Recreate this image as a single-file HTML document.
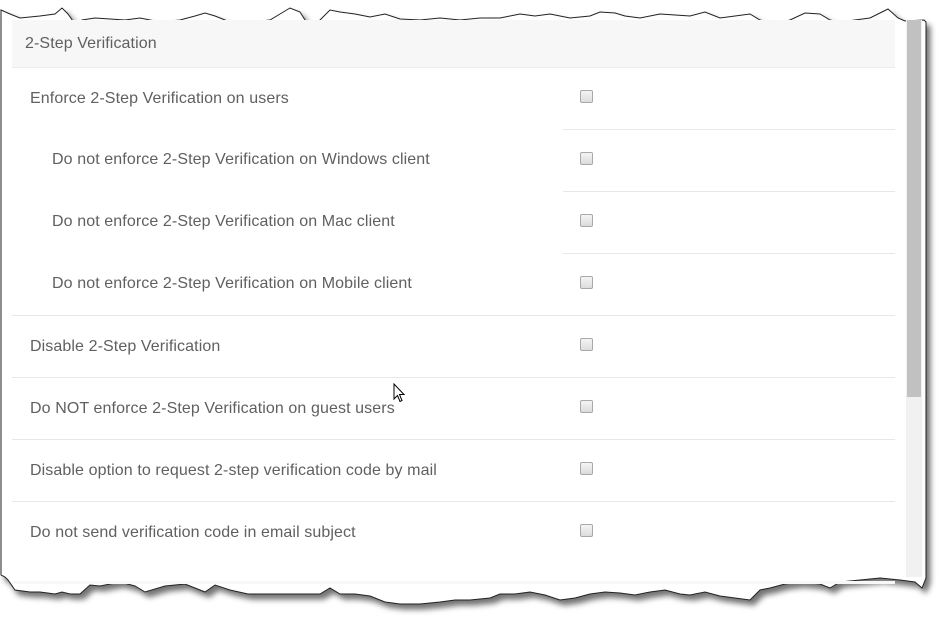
<!DOCTYPE html>
<html><head><meta charset="utf-8"><style>
body{margin:0;width:942px;height:630px;background:#fff;position:relative;overflow:hidden;font-family:"Liberation Sans",sans-serif;}
.t{position:absolute;font-size:16px;letter-spacing:0.1px;color:#606060;white-space:nowrap;line-height:18px}
.cb{position:absolute;left:580px;width:11px;height:11px;border:1px solid #a9a9a9;border-radius:2px;background:linear-gradient(#f4f4f4,#dcdcdc)}
.ln{position:absolute;height:1px;background:#e8e8e8;right:47px}
</style></head><body>
<svg width="942" height="630" style="position:absolute;left:0;top:0">
<defs><filter id="s" x="-5%" y="-5%" width="110%" height="115%"><feDropShadow dx="4" dy="5" stdDeviation="3" flood-color="#000" flood-opacity="0.55"/></filter></defs>
<path filter="url(#s)" fill="#fff" stroke="#222" stroke-width="1" d="M1,10 L10,14 L20,18 L40,16 L55,14 L62,8 L68,14 L75,24 L82,20 L95,18 L110,19 L125,20 L140,18 L160,22 L180,20 L195,16 L205,13 L215,16 L230,22 L250,22 L270,20 L280,14 L290,8 L300,12 L310,28 L318,22 L330,10 L340,12 L355,14 L370,17 L385,14 L400,19 L420,20 L440,18 L460,20 L480,18 L500,18 L520,14 L535,16 L550,14 L570,18 L590,16 L600,12 L615,13 L625,16 L640,18 L660,14 L675,15 L690,16 L705,12 L720,18 L735,16 L750,14 L760,20 L775,24 L790,20 L805,13 L820,14 L830,20 L840,22 L855,20 L870,18 L880,13 L888,9 L898,18 L905,21 L924,20 L926,22 L926,578 L922,588 L915,582 L900,580 L880,578 L860,580 L840,582 L830,588 L820,584 L800,582 L785,584 L770,588 L760,590 L750,600 L735,598 L720,596 L705,592 L690,595 L680,594 L665,590 L650,592 L635,595 L620,593 L605,592 L590,594 L575,598 L560,600 L545,595 L530,592 L515,594 L500,594 L490,598 L470,600 L455,600 L440,602 L420,604 L400,604 L385,602 L370,596 L355,594 L340,594 L330,588 L320,594 L300,594 L280,594 L262,594 L248,594 L230,590 L215,585 L205,592 L195,588 L185,584 L165,586 L145,592 L135,586 L120,582 L100,586 L90,585 L80,594 L70,594 L62,592 L55,594 L40,592 L30,592 L15,590 L8,580 L5,577 L1,575 Z"/>
</svg>
<div style="position:absolute;left:12px;top:20px;width:883px;height:47px;background:#f7f7f7;border-bottom:1px solid #ececec"></div>
<div style="position:absolute;left:12px;top:581px;width:883px;height:3px;background:#f7f7f7"></div>
<div style="position:absolute;left:906px;top:20px;width:16px;height:557px;background:#f1f1f1"></div>
<div style="position:absolute;left:907px;top:20px;width:14px;height:377px;background:#c1c1c1"></div>
<div class="t" style="left:25px;top:35px">2-Step Verification</div>
<div class="t" style="left:30px;top:90px">Enforce 2-Step Verification on users</div>
<div class="cb" style="top:90px"></div>
<div class="ln" style="left:563px;top:129px"></div>
<div class="t" style="left:52px;top:151px">Do not enforce 2-Step Verification on Windows client</div>
<div class="cb" style="top:152px"></div>
<div class="ln" style="left:563px;top:191px"></div>
<div class="t" style="left:52px;top:213px">Do not enforce 2-Step Verification on Mac client</div>
<div class="cb" style="top:214px"></div>
<div class="ln" style="left:563px;top:253px"></div>
<div class="t" style="left:52px;top:275px">Do not enforce 2-Step Verification on Mobile client</div>
<div class="cb" style="top:276px"></div>
<div class="ln" style="left:12px;top:315px"></div>
<div class="t" style="left:30px;top:338px">Disable 2-Step Verification</div>
<div class="cb" style="top:338px"></div>
<div class="ln" style="left:12px;top:377px"></div>
<div class="t" style="left:30px;top:400px">Do NOT enforce 2-Step Verification on guest users</div>
<div class="cb" style="top:400px"></div>
<div class="ln" style="left:12px;top:439px"></div>
<div class="t" style="left:30px;top:462px">Disable option to request 2-step verification code by mail</div>
<div class="cb" style="top:462px"></div>
<div class="ln" style="left:12px;top:501px"></div>
<div class="t" style="left:30px;top:524px">Do not send verification code in email subject</div>
<div class="cb" style="top:524px"></div>
<svg width="14" height="22" style="position:absolute;left:393px;top:383px"><path d="M1,1 L1,16 L4.5,12.5 L7,18.5 L9,17.5 L6.5,11.5 L11,11.5 Z" fill="#fff" stroke="#000" stroke-width="1"/></svg>
</body></html>
